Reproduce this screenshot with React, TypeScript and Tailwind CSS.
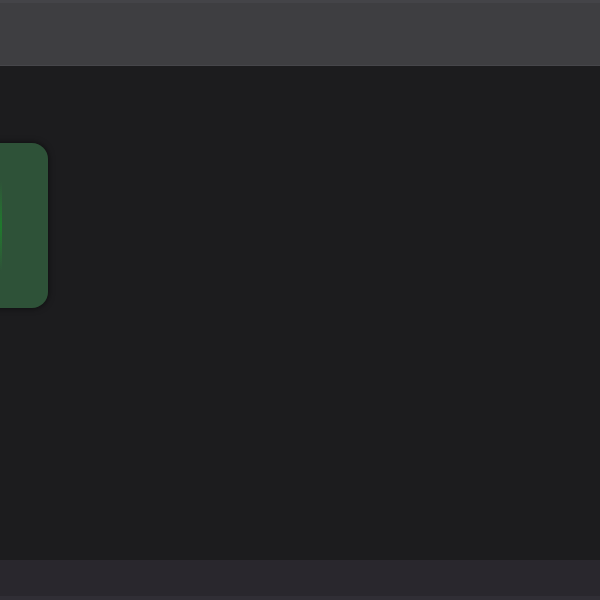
import React from "react";

const App: React.FC = () => {
    return (
        <div className="flex flex-col w-full h-[600px] bg-[#1c1c1e] overflow-hidden">
            {/* top bar */}
            <div className="h-[66px] shrink-0 bg-[#3e3e41] border-t-[3px] border-t-[#444448] border-b border-b-[#46464a]" />

            {/* content */}
            <div className="flex-1 flex flex-col pt-[77px]">
                <div className="flex items-center w-[70px] h-[165px] -ml-[22px] rounded-2xl bg-[#2e5238] shadow-[0_0_6px_rgba(0,0,0,0.6)]">
                    <div className="ml-[21px] w-[3px] h-[90px] bg-gradient-to-b from-[#2e5238] via-[#1e7a2c] to-[#2e5238]" />
                </div>
            </div>

            {/* bottom bar */}
            <div className="h-[40px] shrink-0 bg-[#29272d] border-b-[4px] border-b-[#302e35]" />
        </div>
    );
};

export default App;
